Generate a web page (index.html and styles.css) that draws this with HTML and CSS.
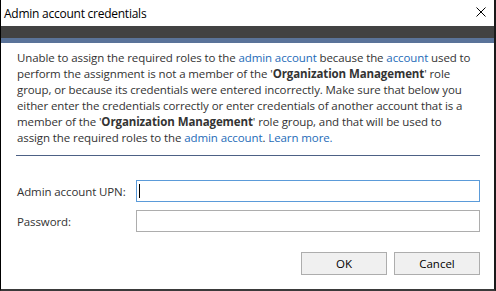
FILE: index.html
```html
<!DOCTYPE html>
<html>
<head>
<meta charset="utf-8">
<link rel="stylesheet" href="styles.css">
</head>
<body>
<div class="window">
  <div class="titlebar">
    <span class="title">Admin account credentials</span>
    <svg class="close" width="10" height="10" viewBox="0 0 10 10"><path d="M0.5 0.5 L9.5 9.5 M9.5 0.5 L0.5 9.5" stroke="#000" stroke-width="1" fill="none"/></svg>
  </div>
  <div class="band-dark"></div>
  <div class="band-blue"></div>
  <div class="content">
    <p class="message">Unable to assign the required roles to the <a class="link">admin account</a> because the <a class="link">account</a> used to<br>perform the assignment is not a member of the '<b>Organization Management</b>' role<br>group, or because its credentials were entered incorrectly. Make sure that below you<br>either enter the credentials correctly or enter credentials of another account that is a<br>member of the '<b>Organization Management</b>' role group, and that will be used to<br>assign the required roles to the <a class="link">admin account</a>. <a class="link">Learn more.</a></p>
    <div class="separator"></div>
    <div class="form">
      <div class="row">
        <label class="label">Admin account UPN:</label>
        <div class="input focused"><span class="caret"></span></div>
      </div>
      <div class="row">
        <label class="label">Password:</label>
        <div class="input"></div>
      </div>
    </div>
    <div class="buttons">
      <div class="button">OK</div>
      <div class="button">Cancel</div>
    </div>
  </div>
</div>
</body>
</html>
```

FILE: styles.css
```css
html, body {
  margin: 0;
  padding: 0;
  background: #ffffff;
}
body {
  font-family: "Open Sans", "Noto Sans", sans-serif;
  color: #333333;
}
.window {
  box-sizing: border-box;
  width: 496px;
  height: 291px;
  border-left: 1px solid #000000;
  border-right: 2px solid #1a1a1a;
  border-bottom: 2px solid #3a3a3a;
  background: #ffffff;
  display: flex;
  flex-direction: column;
}
.titlebar {
  height: 26px;
  display: flex;
  align-items: center;
  justify-content: space-between;
  padding-left: 3px;
  padding-right: 8px;
}
.title {
  font-size: 12px;
  color: #000000;
  letter-spacing: -0.25px;
}
.close {
  display: block;
  margin-top: -3px;
}
.band-dark {
  height: 12px;
  background: #424242;
}
.band-blue {
  height: 5px;
  background: #5a7399;
}
.content {
  padding: 0 14px 0 15px;
  display: flex;
  flex-direction: column;
}
.message {
  margin: 7px 0 0 0;
  font-size: 11.5px;
  line-height: 16px;
  white-space: nowrap;
  padding-left: 1px;
  letter-spacing: -0.1px;
}
.message b {
  font-weight: 700;
  color: #333333;
}
.link {
  color: #1e6bb8;
}
.separator {
  height: 1px;
  background: #4d6185;
  margin-top: 9px;
}
.form {
  margin-top: 24px;
  display: flex;
  flex-direction: column;
  gap: 8px;
}
.row {
  display: flex;
  align-items: center;
}
.label {
  width: 120px;
  font-size: 11.5px;
  padding-left: 1px;
  box-sizing: border-box;
  letter-spacing: -0.1px;
}
.input {
  flex: 1;
  height: 22px;
  box-sizing: border-box;
  border: 1px solid #adadad;
  display: flex;
  align-items: center;
}
.input.focused {
  border-color: #5b9bd9;
}
.caret {
  width: 1px;
  height: 14px;
  background: #000000;
  margin-left: 2px;
}
.buttons {
  margin-top: 20px;
  display: flex;
  justify-content: flex-end;
  gap: 7px;
}
.button {
  width: 86px;
  height: 23px;
  box-sizing: border-box;
  border: 1px solid #adadad;
  background: #f0f0f0;
  font-size: 11.5px;
  color: #000000;
  display: flex;
  align-items: center;
  justify-content: center;
}
```
